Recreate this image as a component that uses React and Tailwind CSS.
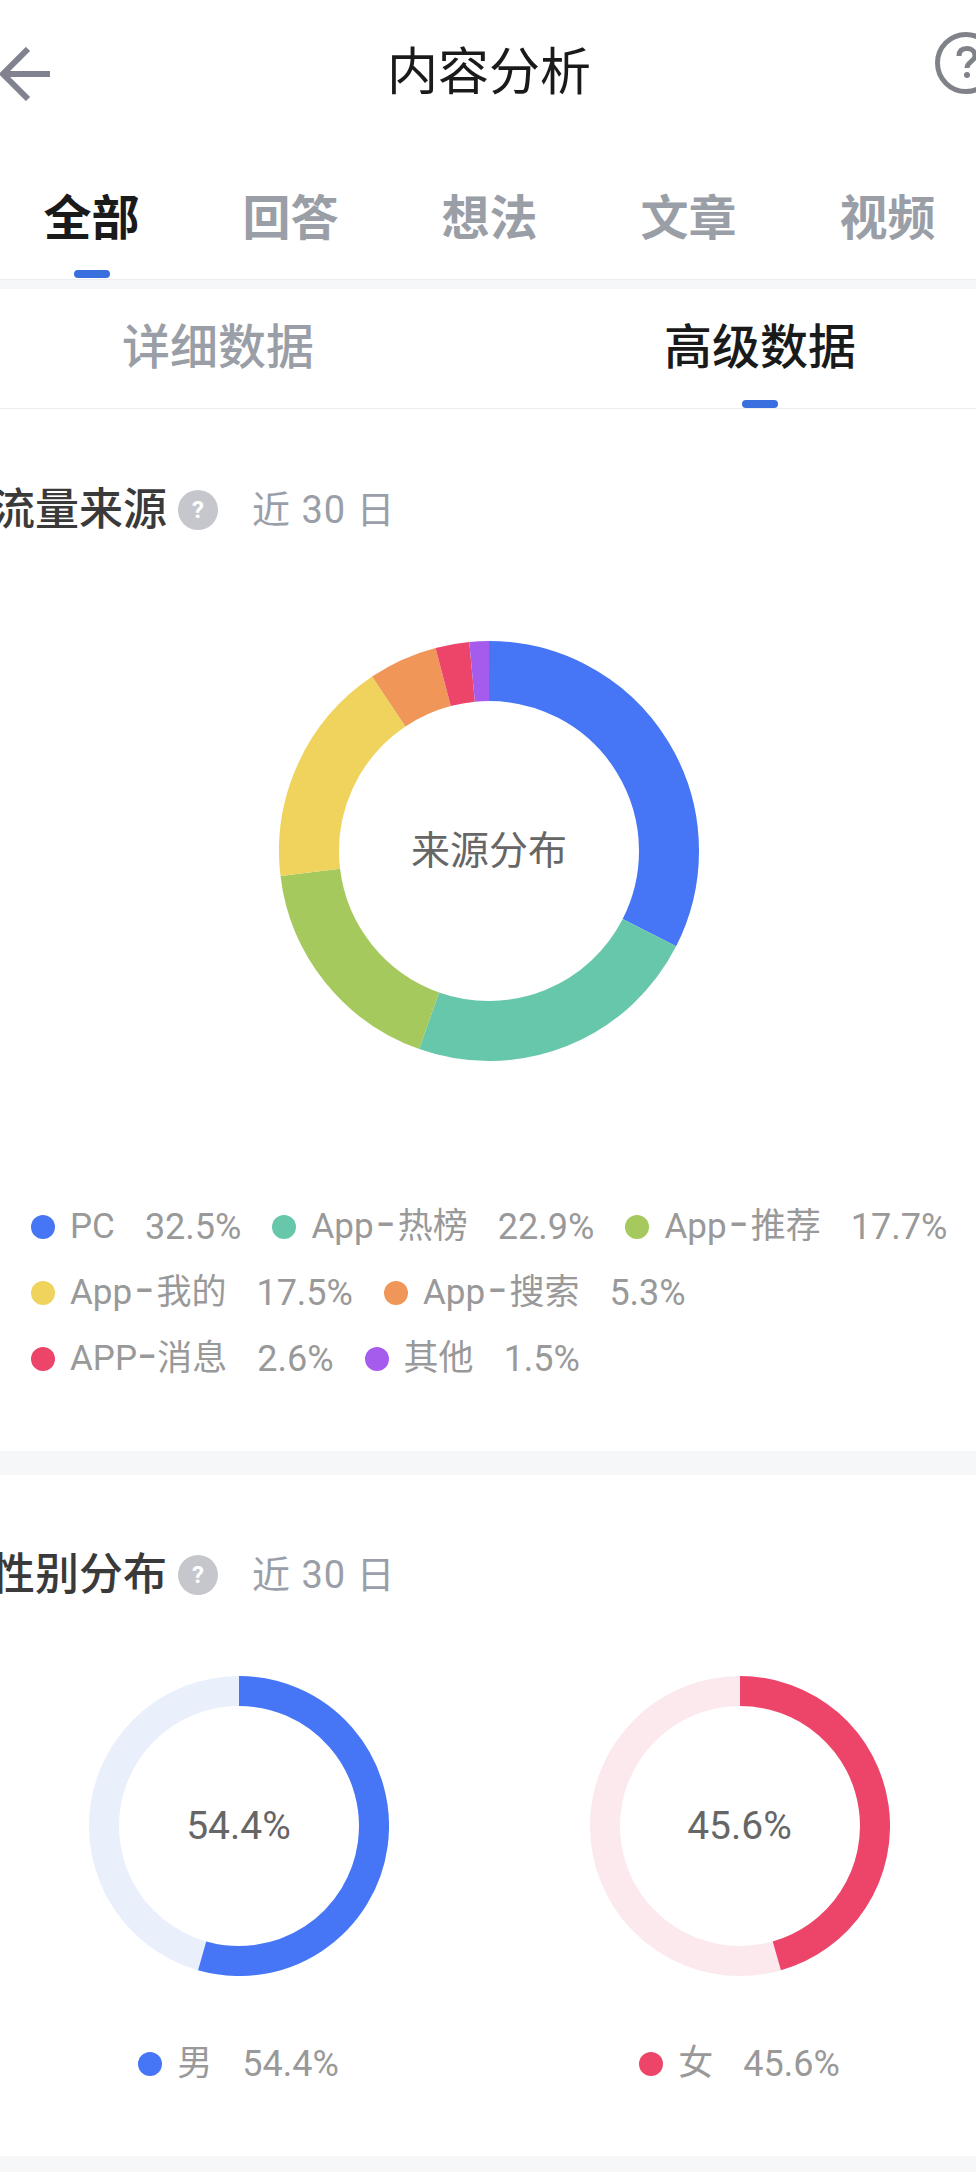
const sources = [
    { name: "PC", pct: 32.5, dot: "bg-[#4676f5]", color: "#4676f5" },
    { name: "App-热榜", pct: 22.9, dot: "bg-[#67c7aa]", color: "#67c7aa" },
    { name: "App-推荐", pct: 17.7, dot: "bg-[#a5c95d]", color: "#a5c95d" },
    { name: "App-我的", pct: 17.5, dot: "bg-[#efd35d]", color: "#efd35d" },
    { name: "App-搜索", pct: 5.3, dot: "bg-[#f09658]", color: "#f09658" },
    { name: "APP-消息", pct: 2.6, dot: "bg-[#ec4569]", color: "#ec4569" },
    { name: "其他", pct: 1.5, dot: "bg-[#a55cec]", color: "#a55cec" },
];

const topTabs = ["全部", "回答", "想法", "文章", "视频"];

// clockwise arc starting at `from` percent, 0 is twelve o'clock
const arcPath = (c, r, from, to) => {
    const point = (pct) => {
        const a = (pct / 100) * 2 * Math.PI;
        return `${c + r * Math.sin(a)} ${c - r * Math.cos(a)}`;
    };
    const large = to - from > 50 ? 1 : 0;
    return `M ${point(from)} A ${r} ${r} 0 ${large} 1 ${point(to)}`;
};

function SourceDonut() {
    let start = 0;
    return (
        <div className="relative w-[420px] h-[420px]">
            <svg width="420" height="420" viewBox="0 0 420 420">
                {sources.map((s) => {
                    const d = arcPath(210, 180, start, start + s.pct);
                    start += s.pct;
                    return <path key={s.name} d={d} fill="none" stroke={s.color} strokeWidth="60" />;
                })}
            </svg>
            <div className="absolute inset-0 flex items-center justify-center text-[39px] text-[#666666]">来源分布</div>
        </div>
    );
}

function GenderDonut({ pct, color, track }) {
    return (
        <div className="relative w-[300px] h-[300px]">
            <svg width="300" height="300" viewBox="0 0 300 300">
                <circle cx="150" cy="150" r="135" fill="none" stroke={track} strokeWidth="30" />
                <path d={arcPath(150, 135, 0, pct)} fill="none" stroke={color} strokeWidth="30" />
            </svg>
            <div className="absolute inset-0 flex items-center justify-center text-[39px] text-[#666666]">{pct}%</div>
        </div>
    );
}

function SectionTitle({ title }) {
    return (
        <div className="flex items-center h-12 -ml-[9px]">
            <span className="text-[44px] leading-[48px] font-medium text-[#3a3a3a] whitespace-nowrap">{title}</span>
            <span className="flex items-center justify-center w-10 h-10 ml-[11px] rounded-full bg-[#c5c7cd] text-white text-[24px] font-bold">?</span>
            <span className="ml-[34px] text-[38px] leading-[48px] tracking-[1px] text-[#9a9ea8] whitespace-nowrap">近 30 日</span>
        </div>
    );
}

// the hyphen is longer in the reference than in Roboto
function LegendName({ name }) {
    const parts = name.split("-");
    if (parts.length < 2) {
        return <span className="ml-[15px]">{name}</span>;
    }
    return (
        <span className="ml-[15px]">{parts[0]}<span className={`font-['Inter'] text-[44px] leading-none ${parts[0] === "APP" ? "" : "mx-[2px]"}`}>-</span>{parts[1]}</span>
    );
}

function LegendItem({ name, pct, dot }) {
    return (
        <div className="flex items-center text-[35px] text-[#999999] whitespace-nowrap">
            <span className={`w-6 h-6 rounded-full ${dot}`}></span>
            <LegendName name={name} />
            <span className="ml-[30px] text-[36px]">{pct}%</span>
        </div>
    );
}

export default function App() {
    return (
        <div className="w-[976px] h-[2172px] overflow-hidden bg-white font-['Roboto','Noto_Sans_CJK_SC',sans-serif]">
            {/* nav bar */}
            <div className="grid grid-cols-[1fr_auto_1fr] items-center h-[144px]">
                <svg className="mt-[4px]" width="52" height="54" viewBox="0 0 52 54" fill="none" stroke="#80838f" strokeWidth="6">
                    <path d="M28 2 L3 27 L28 52" />
                    <path d="M3 27 H50" />
                </svg>
                <div className="pl-[2px] pt-[2px] text-[51px] leading-[60px] text-[#1a1a1a]">内容分析</div>
                <svg className="justify-self-end -mr-[21px] mb-[18px]" width="62" height="62" viewBox="0 0 62 62" fill="none" stroke="#808289" strokeWidth="5">
                    <circle cx="31" cy="31" r="28.5" />
                    <path d="M24 24 C24 19 27 16.5 32 16.5 C37 16.5 40 20 40 24 C40 29 32 30 32 36" />
                    <circle cx="32" cy="43" r="3" fill="#808289" stroke="none" />
                </svg>
            </div>

            {/* content type tabs */}
            <div className="flex -ml-[8px] h-[135px]">
                {topTabs.map((tab, i) => (
                    <div key={tab} className="flex flex-col items-center shrink-0 w-[199px] pt-[49px]">
                        <span className={`text-[48px] leading-[52px] font-bold ${i === 0 ? "text-[#1a1a1a]" : "text-[#9a9ea6]"}`}>{tab}</span>
                        {i === 0 && <span className="w-9 h-2 mt-[25px] rounded-full bg-[#3a6fe0]"></span>}
                    </div>
                ))}
            </div>
            <div className="h-[10px] border-t border-[#ebecef] bg-[#f6f7f9]"></div>

            {/* detail / advanced tabs */}
            <div className="border-b border-[#ebecef]">
                <div className="flex -ml-[53px] h-[119px]">
                    <div className="flex flex-col items-center shrink-0 w-[542px] pt-[33px]">
                        <span className="text-[48px] leading-[52px] font-medium text-[#9a9ea6]">详细数据</span>
                    </div>
                    <div className="flex flex-col items-center shrink-0 w-[542px] pt-[33px]">
                        <span className="text-[48px] leading-[52px] font-medium text-[#1a1a1a]">高级数据</span>
                        <span className="w-9 h-2 mt-[26px] rounded-full bg-[#3a6fe0]"></span>
                    </div>
                </div>
            </div>

            {/* traffic sources */}
            <div className="pt-[77px] pb-[59px]">
                <SectionTitle title="流量来源" />
                <div className="flex justify-center pl-[2px] mt-[107px]">
                    <SourceDonut />
                </div>
                <div className="flex flex-wrap gap-x-[31px] pl-[31px] pr-[16px] mt-[133px]">
                    {sources.map((s) => (
                        <div key={s.name} className="h-[66px] flex items-center">
                            <LegendItem name={s.name} pct={s.pct} dot={s.dot} />
                        </div>
                    ))}
                </div>
            </div>
            <div className="h-6 bg-[#f6f7f9]"></div>

            {/* gender */}
            <div className="pt-[76px] pb-[68px]">
                <SectionTitle title="性别分布" />
                <div className="flex -ml-[12px] mt-[77px]">
                    <div className="flex flex-col items-center shrink-0 w-[501px]">
                        <GenderDonut pct={54.4} color="#4676f5" track="#e9f0fc" />
                        <div className="flex items-center h-12 mt-[64px]">
                            <LegendItem name="男" pct={54.4} dot="bg-[#4676f5]" />
                        </div>
                    </div>
                    <div className="flex flex-col items-center shrink-0 w-[501px]">
                        <GenderDonut pct={45.6} color="#ec4569" track="#fbe9ed" />
                        <div className="flex items-center h-12 mt-[64px]">
                            <LegendItem name="女" pct={45.6} dot="bg-[#ec4569]" />
                        </div>
                    </div>
                </div>
            </div>
            <div className="h-4 bg-[#f6f7f9]"></div>
        </div>
    );
}
